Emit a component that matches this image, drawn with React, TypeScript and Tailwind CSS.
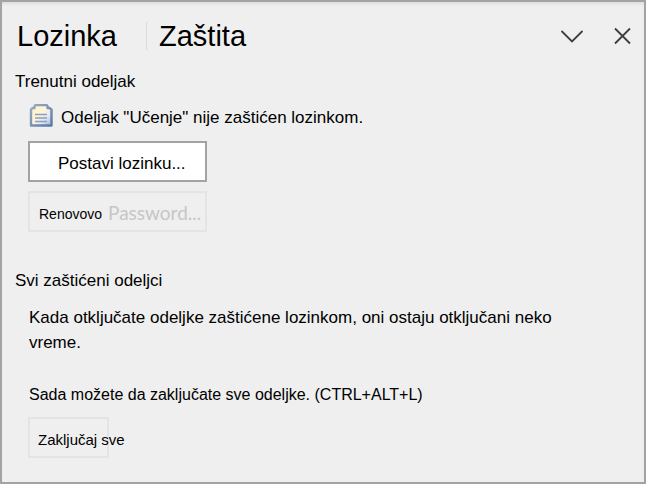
function SectionIcon() {
  return (
    <svg width="24" height="24" viewBox="0 0 24 24" aria-hidden="true" className="shrink-0">
      <defs>
        <linearGradient id="page" x1="0" y1="0" x2="1" y2="1">
          <stop offset="0" stopColor="#fdf0bd" />
          <stop offset="0.45" stopColor="#fdf6dc" />
          <stop offset="0.7" stopColor="#dfe7f3" />
          <stop offset="1" stopColor="#9db4d8" />
        </linearGradient>
        <linearGradient id="edge" x1="0" y1="0" x2="1" y2="1">
          <stop offset="0" stopColor="#9aacc2" />
          <stop offset="1" stopColor="#5a78a8" />
        </linearGradient>
      </defs>
      <path
        d="M2 21.500V5.500L3.500 4H5.500V2L6.500 1H17.500L18.500 2V4H20.500L22.500 5.500V21.500Z"
        fill="url(#page)"
        stroke="url(#edge)"
        strokeWidth="2.400"
        strokeLinejoin="round"
      />
      <path d="M6 10.500H18M6 14H18M6 17.500H18" stroke="#8d9fbd" strokeWidth="1.300" />
    </svg>
  );
}

export default function App() {
  return (
    <main className="min-h-screen border-2 border-[#a3a3a3] bg-[#efefef] font-['Liberation_Sans',Arial,sans-serif] text-[17px] leading-6 text-black shadow-[inset_0_3px_3px_-1px_#dddddd]">
      <header className="flex h-[52px] items-center justify-between border-b border-[#f1f1f1] pt-4 pr-3 pl-[15px]">
        <h1 className="flex items-center text-[29px] leading-8">
          <span className="w-[129px]">Lozinka</span>
          <span className="h-7 w-px bg-[#dddddd]" />
          <span className="pl-3">Zaštita</span>
        </h1>
        <div className="flex items-center gap-7">
          <button type="button" aria-label="Opcije okna" className="flex h-6 w-6 items-center justify-center">
            <svg width="24" height="24" viewBox="0 0 24 24" fill="none" stroke="#3d3d3d" strokeWidth="1.800">
              <path d="M1.500 7L12 17.500L22.500 7" />
            </svg>
          </button>
          <button type="button" aria-label="Zatvori" className="flex h-6 w-5 items-center justify-center">
            <svg width="20" height="24" viewBox="0 0 20 24" fill="none" stroke="#3d3d3d" strokeWidth="1.800">
              <path d="M3 4.500L18 19.500M18 4.500L3 19.500" />
            </svg>
          </button>
        </div>
      </header>

      <section className="px-[13px] pt-4">
        <h2>Trenutni odeljak</h2>
        <div className="pt-[10px] pl-[13px]">
          <p className="flex items-start gap-2 pl-px">
            <SectionIcon />
            <span className="pt-[2px]">Odeljak "Učenje" nije zaštićen lozinkom.</span>
          </p>
          <button
            type="button"
            className="mt-[11px] flex h-[41px] w-[179px] items-center border-2 border-[#a3a3a3] bg-white pt-[5px] pl-7 whitespace-nowrap"
          >
            Postavi lozinku...
          </button>
          <button
            type="button"
            disabled
            className="mt-[9px] flex h-[41px] w-[179px] items-center gap-[6px] border-2 border-[#e4e4e4] pl-[9px] text-sm whitespace-nowrap"
          >
            <span className="pt-[5px]">Renovovo</span>
            <span className="pt-[2px] font-[Lato,sans-serif] text-[19px] text-[#c6c6c6]">Password...</span>
          </button>
        </div>
      </section>

      <section className="px-[13px] pt-[37px]">
        <h2>Svi zaštićeni odeljci</h2>
        <div className="pt-3 pl-[13px]">
          <p className="max-w-[560px] pl-px leading-[25px]">
            Kada otključate odeljke zaštićene lozinkom, oni ostaju otključani neko vreme.
          </p>
          <p className="pt-7 pl-px text-base leading-6">Sada možete da zaključate sve odeljke. (CTRL+ALT+L)</p>
          <button
            type="button"
            className="mt-[10px] flex h-[41px] w-[81px] items-center border-2 border-[#e4e4e4] pt-[5px] pl-2 text-[15px] whitespace-nowrap"
          >
            Zaključaj sve
          </button>
        </div>
      </section>
    </main>
  );
}
